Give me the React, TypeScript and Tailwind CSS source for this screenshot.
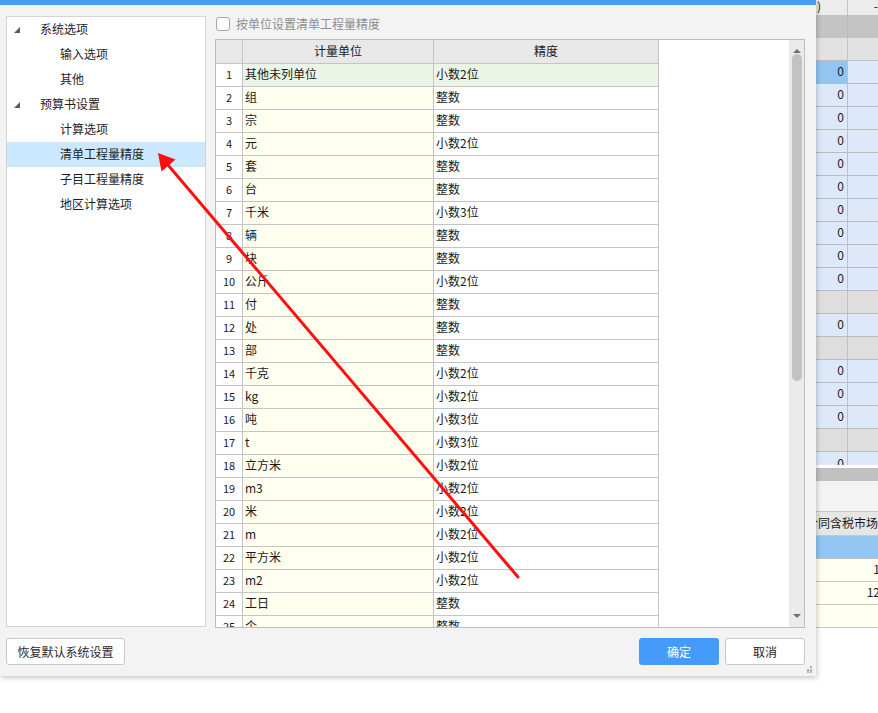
import React from "react"

type Row = { unit: string; precision: string }

const rows: Row[] = [
  { unit: "其他未列单位", precision: "小数2位" },
  { unit: "组", precision: "整数" },
  { unit: "宗", precision: "整数" },
  { unit: "元", precision: "小数2位" },
  { unit: "套", precision: "整数" },
  { unit: "台", precision: "整数" },
  { unit: "千米", precision: "小数3位" },
  { unit: "辆", precision: "整数" },
  { unit: "块", precision: "整数" },
  { unit: "公斤", precision: "小数2位" },
  { unit: "付", precision: "整数" },
  { unit: "处", precision: "整数" },
  { unit: "部", precision: "整数" },
  { unit: "千克", precision: "小数2位" },
  { unit: "kg", precision: "小数2位" },
  { unit: "吨", precision: "小数3位" },
  { unit: "t", precision: "小数3位" },
  { unit: "立方米", precision: "小数2位" },
  { unit: "m3", precision: "小数2位" },
  { unit: "米", precision: "小数2位" },
  { unit: "m", precision: "小数2位" },
  { unit: "平方米", precision: "小数2位" },
  { unit: "m2", precision: "小数2位" },
  { unit: "工日", precision: "整数" },
  { unit: "个", precision: "整数" },
]

const tree = [
  { label: "系统选项", level: 0 },
  { label: "输入选项", level: 1 },
  { label: "其他", level: 1 },
  { label: "预算书设置", level: 0 },
  { label: "计算选项", level: 1 },
  { label: "清单工程量精度", level: 1, active: true },
  { label: "子目工程量精度", level: 1 },
  { label: "地区计算选项", level: 1 },
]

// background grid rows peeking out to the right of the dialog
const bgRows: ("blue" | "val" | "gray")[] = [
  "blue", "val", "val", "val", "val", "val", "val", "val", "val", "val",
  "gray", "val", "gray", "val", "val", "val", "gray",
]

function Expander() {
  return (
    <svg width="6" height="6" viewBox="0 0 6 6" className="shrink-0">
      <polygon points="6,0 6,6 0,6" fill="#5a5a5a" />
    </svg>
  )
}

function TreePanel() {
  return (
    <div className="w-[200px] h-[611px] bg-white border border-[#d4d4d4] shrink-0">
      {tree.map((item) => (
        <div
          key={item.label}
          className={`h-[25px] flex items-center pb-[2px] text-[12px] text-[#1e1e1e] ${
            item.active ? "bg-[#cce8ff]" : ""
          }`}
        >
          {item.level === 0 ? (
            <div className="flex items-center">
              <div className="w-[33px] pl-[7px] flex items-center pt-[3px]">
                <Expander />
              </div>
              <span>{item.label}</span>
            </div>
          ) : (
            <span className="pl-[53px]">{item.label}</span>
          )}
        </div>
      ))}
    </div>
  )
}

function ScrollBar() {
  return (
    <div className="w-[15px] h-full bg-[#ebebeb] flex flex-col items-center shrink-0">
      <div className="h-[13px] flex items-end justify-center">
        <svg width="8" height="4" viewBox="0 0 8 4">
          <polygon points="0,4 4,0 8,4" fill="#6e6e6e" />
        </svg>
      </div>
      <div className="w-[10px] h-[327px] mt-[1px] bg-[#c2c2c2] rounded-full" />
      <div className="flex-1" />
      <div className="h-[13px] flex items-start justify-center">
        <svg width="8" height="4" viewBox="0 0 8 4">
          <polygon points="0,0 8,0 4,4" fill="#6e6e6e" />
        </svg>
      </div>
    </div>
  )
}

function UnitTable() {
  return (
    <div className="w-[590px] h-[589px] border border-[#bdbdbd] bg-white flex text-[12px] text-[#1a1a1a]">
      <div className="flex-1 flex flex-col overflow-hidden">
        <div className="flex h-[24px] shrink-0">
          <div className="w-[27px] bg-[#e8e8e8] border-r border-b border-[#c4c4c4]" />
          <div className="w-[191px] bg-[#e8e8e8] border-r border-b border-[#c4c4c4] flex items-center justify-center pb-[2px]">
            计量单位
          </div>
          <div className="w-[225px] bg-[#e8e8e8] border-r border-b border-[#c4c4c4] flex items-center justify-center pb-[2px]">
            精度
          </div>
        </div>
        {rows.map((r, i) => {
          const selected = i === 0
          return (
            <div key={i} className="flex h-[23px] shrink-0">
              <div className="w-[27px] bg-white border-r border-b border-[#c4c4c4] flex items-center justify-center pb-[1px] text-[11px]">
                {i + 1}
              </div>
              <div
                className={`w-[191px] border-r border-b border-[#c4c4c4] flex items-center pl-[2px] pb-[2px] ${
                  selected ? "bg-[#ebf5e7]" : "bg-[#fffff0]"
                }`}
              >
                {r.unit}
              </div>
              <div
                className={`w-[225px] border-r border-b border-[#c4c4c4] flex items-center pl-[2px] pb-[2px] ${
                  selected ? "bg-[#ebf5e7]" : "bg-white"
                }`}
              >
                {r.precision}
              </div>
            </div>
          )
        })}
      </div>
      <ScrollBar />
    </div>
  )
}

function Dialog() {
  return (
    <div className="w-[816px] h-[676px] bg-[#f3f3f3] shrink-0 relative z-10 shadow-[1px_2px_5px_rgba(0,0,0,0.22)] flex flex-col">
      <div className="h-[5px] bg-[#4b9bf2]" />
      <div className="flex pt-[11px] pl-[6px] gap-[9px]">
        <TreePanel />
        <div className="flex flex-col">
          <div className="h-[23px] flex items-start gap-[6px] pl-[1px]">
            <div className="w-[14px] h-[14px] mt-[1px] bg-white border border-[#a8a8a8] rounded-[3px]" />
            <span className="text-[12px] text-[#8e8e8e] leading-[15px]">按单位设置清单工程量精度</span>
          </div>
          <UnitTable />
        </div>
      </div>
      <div className="flex items-center pl-[6px] pr-[11px] mt-[10px]">
        <button className="w-[119px] h-[27px] bg-white border border-[#c8c8c8] rounded-[3px] text-[12px] text-[#2a2a2a]">
          恢复默认系统设置
        </button>
        <div className="flex-1" />
        <button className="w-[80px] h-[27px] bg-[#459bfa] rounded-[3px] text-[12px] text-white">确定</button>
        <button className="w-[80px] h-[27px] ml-[6px] bg-white border border-[#c8c8c8] rounded-[3px] text-[12px] text-[#1a1a1a]">
          取消
        </button>
      </div>
      <div className="flex-1 flex justify-end items-end pr-[4px] pb-[3px]">
        <svg width="7" height="7" viewBox="0 0 7 7">
          <rect x="5" y="0" width="2" height="2" fill="#b0b0b0" />
          <rect x="2" y="3" width="2" height="2" fill="#b0b0b0" />
          <rect x="5" y="3" width="2" height="2" fill="#b0b0b0" />
          <rect x="2" y="5" width="2" height="2" fill="#b0b0b0" />
          <rect x="5" y="5" width="2" height="2" fill="#b0b0b0" />
        </svg>
      </div>
    </div>
  )
}

function BackgroundStrip() {
  return (
    <div className="w-[62px] h-full flex flex-col text-[12px] text-[#1a1a1a] overflow-hidden">
      <div className="h-[15px] flex bg-[#ececec] shrink-0">
        <div className="w-[32px] border-r border-[#c4c4c4] leading-[12px] pl-[1px]">)</div>
        <div className="flex-1 text-right leading-[12px]">-</div>
      </div>
      <div className="h-[23px] flex bg-[#c4c4c4] shrink-0">
        <div className="w-[32px] border-r border-[#bababa]" />
      </div>
      <div className="h-[23px] flex bg-[#e2e2e2] border-b border-[#c0c0c0] shrink-0">
        <div className="w-[32px] border-r border-[#c4c4c4]" />
      </div>
      {bgRows.map((kind, i) => (
        <div
          key={i}
          className={`h-[23px] flex border-b border-[#bcbcbc] shrink-0 ${
            kind === "gray" ? "bg-[#dedede]" : "bg-[#dde9fb]"
          }`}
        >
          <div
            className={`w-[32px] border-r border-[#c0c0c0] flex items-center justify-end pr-[3px] pb-[2px] ${
              kind === "blue" ? "bg-[#92c5f2]" : ""
            }`}
          >
            {kind === "gray" ? "" : "0"}
          </div>
        </div>
      ))}
      <div className="h-[13px] flex bg-[#dde9fb] overflow-hidden shrink-0">
        <div className="w-[32px] border-r border-[#c0c0c0] flex items-start justify-end pr-[3px] leading-[20px] pt-[1px]">
          0
        </div>
      </div>
      <div className="h-[3px] bg-white shrink-0" />
      <div className="h-[13px] bg-[#c0c0c0] shrink-0" />
      <div className="h-[31px] bg-[#f3f3f3] border-b border-[#c8c8c8] shrink-0" />
      <div className="h-[24px] bg-[#e6e6e6] border-b border-[#c8c8c8] flex items-center pb-[2px] shrink-0 overflow-hidden">
        <span className="whitespace-nowrap -ml-[10px] text-[12px]">合同含税市场</span>
      </div>
      <div className="h-[23px] bg-[#92c5f2] border-b border-[#c0c0c0] shrink-0" />
      <div className="h-[23px] bg-[#fffff0] border-b border-[#c8c8c8] flex items-center justify-end pb-[2px] shrink-0">
        <span className="-mr-[2px]">1</span>
      </div>
      <div className="h-[23px] bg-[#fffff0] border-b border-[#c8c8c8] flex items-center justify-end pb-[2px] shrink-0">
        <span className="-mr-[2px]">12</span>
      </div>
      <div className="h-[23px] bg-[#fffff0] border-b border-[#c8c8c8] shrink-0" />
      <div className="flex-1 bg-white" />
    </div>
  )
}

export default function App() {
  return (
    <div className="w-[878px] h-[713px] bg-white overflow-hidden relative flex items-start font-['Noto_Sans_CJK_SC','Microsoft_YaHei',sans-serif]">
      <Dialog />
      <BackgroundStrip />
      {/* red annotation arrow */}
      <svg
        className="absolute inset-0 z-20 pointer-events-none"
        width="878"
        height="713"
        viewBox="0 0 878 713"
      >
        <line x1="168" y1="165" x2="518" y2="577" stroke="#ff1010" strokeWidth="3" strokeLinecap="round" />
        <polygon points="158,153 161.5,171.5 175.5,159.5" fill="#ff1010" />
      </svg>
    </div>
  )
}
